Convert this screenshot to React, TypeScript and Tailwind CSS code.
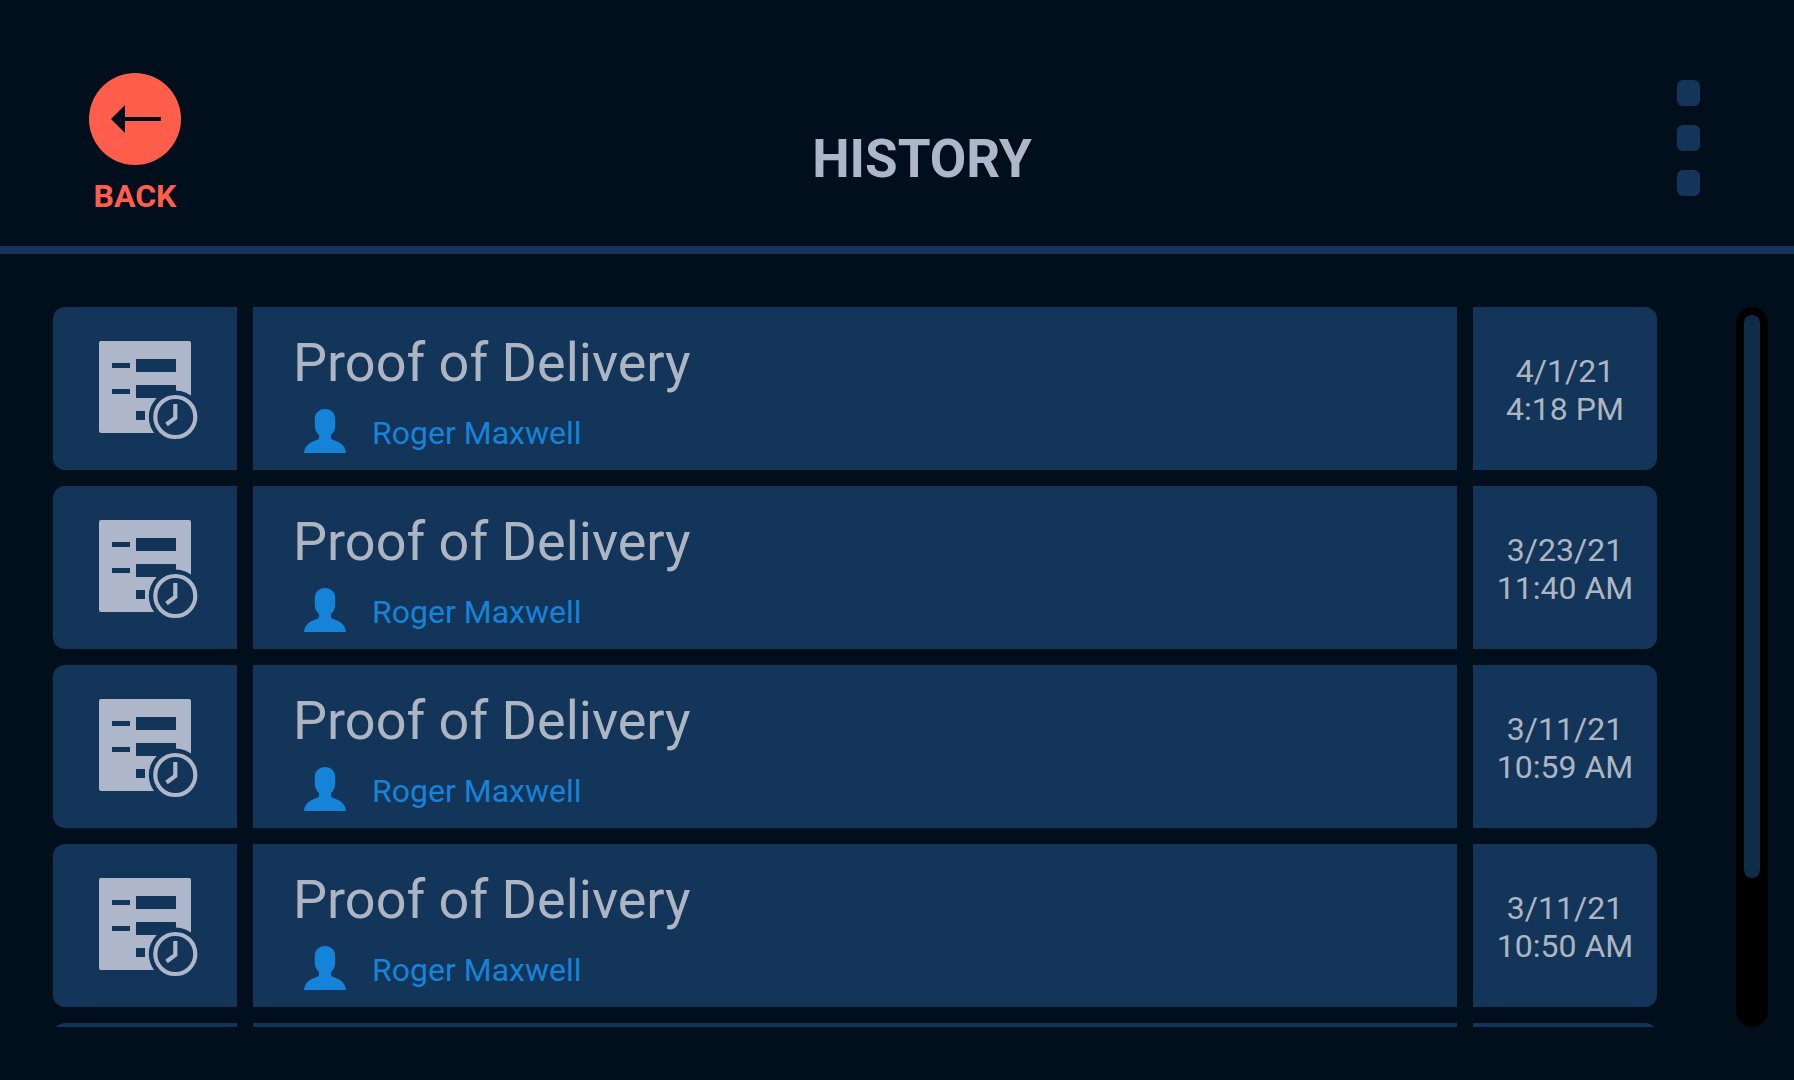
type Entry = { title: string; person: string; date: string; time: string };

const entries: Entry[] = [
  { title: "Proof of Delivery", person: "Roger Maxwell", date: "4/1/21", time: "4:18 PM" },
  { title: "Proof of Delivery", person: "Roger Maxwell", date: "3/23/21", time: "11:40 AM" },
  { title: "Proof of Delivery", person: "Roger Maxwell", date: "3/11/21", time: "10:59 AM" },
  { title: "Proof of Delivery", person: "Roger Maxwell", date: "3/11/21", time: "10:50 AM" },
];

function BackIcon() {
  return (
    <svg width="92" height="92" viewBox="0 0 92 92" aria-hidden="true">
      <circle cx="46" cy="46" r="46" fill="#ff5e4c" />
      <path d="M22 46 36 32V44H72V48H36V60Z" fill="#010f1d" />
    </svg>
  );
}

// Form sheet with a clock over its lower right corner
function FormHistoryIcon() {
  return (
    <svg width="99" height="99" viewBox="0 0 99 99" aria-hidden="true">
      <rect width="92" height="92" rx="2" fill="#aeb7c9" />
      <g fill="#133559">
        <rect x="13" y="22" width="18" height="5" />
        <rect x="37" y="18" width="40" height="13" />
        <rect x="13" y="48" width="18" height="5" />
        <rect x="37" y="44" width="40" height="13" />
        <rect x="37" y="70" width="9" height="9" />
        <circle cx="76.3" cy="76" r="26.5" />
      </g>
      <circle cx="76.3" cy="76" r="20" fill="none" stroke="#aeb7c9" strokeWidth="4.2" />
      <path d="M76.3 63V77L67.5 83.5" fill="none" stroke="#aeb7c9" strokeWidth="4.2" />
    </svg>
  );
}

function PersonIcon() {
  return (
    <svg width="42" height="44" viewBox="0 0 42 44" aria-hidden="true">
      <path
        d="M21 0C27 0 31.2 4.3 31.2 10V17C31.2 21 29.5 23.6 27 26V28.5C27 30 28 30.6 30 31.3C37 33.5 41.5 37.5 42 44H0C.5 37.5 5 33.5 12 31.3C14 30.6 15 30 15 28.5V26C12.5 23.6 10.8 21 10.8 17V10C10.8 4.3 15 0 21 0Z"
        fill="#1583d8"
      />
    </svg>
  );
}

function HistoryRow({ entry }: { entry?: Entry }) {
  return (
    <li className="flex h-[163px] shrink-0 gap-4">
      <div className="flex w-[184px] shrink-0 items-center justify-center rounded-l-xl bg-[#133559] pt-1 pl-1.5">
        {entry && <FormHistoryIcon />}
      </div>
      <div className="flex min-w-0 flex-1 flex-col bg-[#133559] px-10 pt-6">
        {entry && (
          <>
            <h2 className="text-[54px] leading-[64px]">{entry.title}</h2>
            <div className="mt-3 flex h-12 items-center gap-[26px] pl-[11px]">
              <PersonIcon />
              <span className="pt-1 text-[32px] leading-10 text-[#1583d8]">{entry.person}</span>
            </div>
          </>
        )}
      </div>
      <div className="flex w-[184px] shrink-0 flex-col items-center justify-center rounded-r-xl bg-[#133559] pt-0.5 text-[32px] leading-[38px]">
        {entry && (
          <>
            <span>{entry.date}</span>
            <span>{entry.time}</span>
          </>
        )}
      </div>
    </li>
  );
}

export default function App() {
  return (
    <div className="flex h-screen flex-col overflow-hidden bg-[#010f1d] font-['Roboto',sans-serif] text-[#aeb5c2]">
      <header className="flex h-[254px] shrink-0 border-b-8 border-[#133559]">
        <div className="w-[270px] shrink-0 pt-[73px] pl-[89px]">
          <button type="button" className="flex w-[92px] flex-col items-center">
            <BackIcon />
            <span className="mt-3 text-[32px] leading-[38px] font-bold text-[#ff5e4c]">BACK</span>
          </button>
        </div>
        <h1 className="min-w-0 flex-1 pt-[127px] text-center text-[53px] leading-[64px] font-bold text-[#aeb7c9]">
          HISTORY
        </h1>
        <div className="flex w-[220px] shrink-0 items-start justify-end pt-20 pr-[94px]">
          <button type="button" aria-label="Menu" className="flex flex-col gap-[19px]">
            <span className="h-[26px] w-[23px] rounded-md bg-[#133559]" />
            <span className="h-[26px] w-[23px] rounded-md bg-[#133559]" />
            <span className="h-[26px] w-[23px] rounded-md bg-[#133559]" />
          </button>
        </div>
      </header>

      <main className="flex min-h-0 flex-1 gap-[79px] pt-[53px] pr-[26px] pb-[53px] pl-[53px]">
        <ul className="flex min-w-0 flex-1 flex-col gap-4 overflow-hidden">
          {entries.map((entry, i) => (
            <HistoryRow key={i} entry={entry} />
          ))}
          <HistoryRow />
        </ul>
        <div className="flex w-8 shrink-0 flex-col rounded-full bg-black p-2">
          <div className="h-4/5 rounded-full bg-[#0e2d47]" />
        </div>
      </main>
    </div>
  );
}
